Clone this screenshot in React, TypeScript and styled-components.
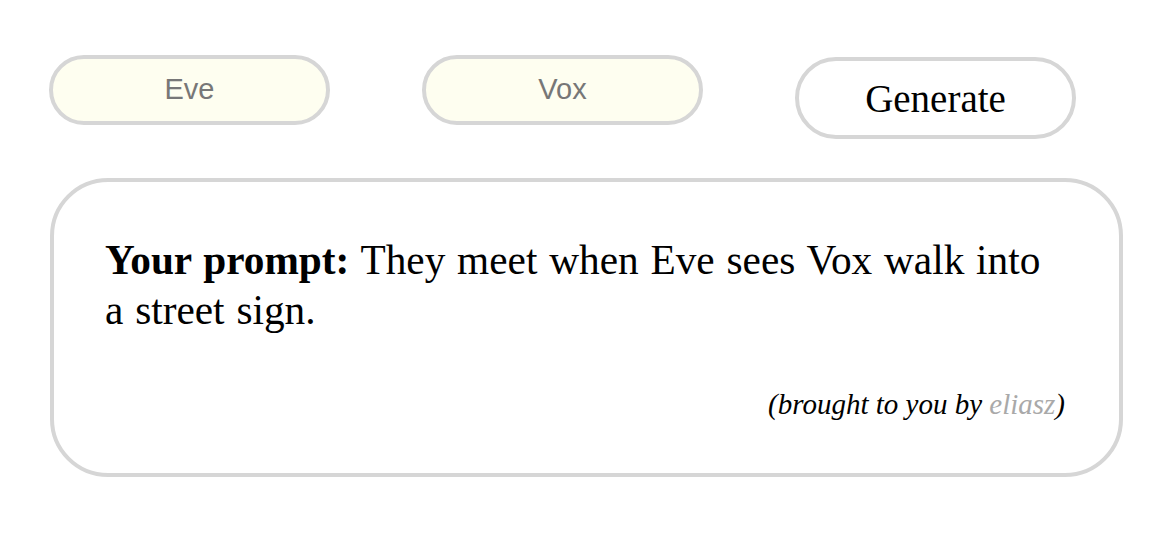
import React, { useState } from 'react'
import styled, { createGlobalStyle } from 'styled-components'

const GlobalStyle = createGlobalStyle`
  html, body {
    margin: 0;
    padding: 0;
    background: #ffffff;
  }
  body {
    font-family: "Liberation Serif", "Times New Roman", serif;
    color: #000;
  }
`

const Page = styled.div`
  width: 1170px;
  height: 536px;
  padding: 55px 0 0 49px;
  box-sizing: border-box;
`

const Controls = styled.div`
  display: flex;
  flex-direction: row;
  align-items: flex-start;
  gap: 92px;
`

const NameInput = styled.input`
  width: 281px;
  height: 70px;
  box-sizing: border-box;
  border: 4px solid #d6d6d6;
  border-radius: 35px;
  background-color: #fefef0;
  font-family: "Liberation Sans", Arial, sans-serif;
  font-size: 29px;
  color: #777777;
  text-align: center;
  outline: none;
  padding: 0 0 2px;
`

const GenerateButton = styled.button`
  width: 281px;
  height: 82px;
  margin-top: 2px;
  box-sizing: border-box;
  border: 4px solid #d6d6d6;
  border-radius: 41px;
  background-color: #ffffff;
  font-family: "Liberation Serif", "Times New Roman", serif;
  font-size: 39px;
  color: #000;
  cursor: pointer;
  padding: 0;
`

const PromptCard = styled.div`
  width: 1073px;
  height: 299px;
  margin-top: 39px;
  margin-left: 1px;
  box-sizing: border-box;
  border: 4px solid #d6d6d6;
  border-radius: 58px;
  padding: 53px 51px 0 51px;
  display: flex;
  flex-direction: column;
`

const PromptText = styled.p`
  margin: 0;
  max-width: 950px;
  font-size: 41.3px;
  line-height: 50px;
  word-spacing: 1.5px;
`

const Credit = styled.div`
  margin-top: 53px;
  text-align: right;
  font-style: italic;
  font-size: 29px;
  padding-right: 3px;
`

const Author = styled.span<{ $muted?: boolean }>`
  color: ${(p) => (p.$muted ? '#a9a9a9' : '#000')};
`

const App: React.FC = () => {
  const [first, setFirst] = useState('Eve')
  const [second, setSecond] = useState('Vox')

  return (
    <>
      <GlobalStyle />
      <Page>
        <Controls>
          <NameInput value={first} onChange={(e) => setFirst(e.target.value)} />
          <NameInput value={second} onChange={(e) => setSecond(e.target.value)} />
          <GenerateButton>Generate</GenerateButton>
        </Controls>
        <PromptCard>
          <PromptText>
            <b>Your prompt:</b> They meet when {first} sees {second} walk into a street sign.
          </PromptText>
          <Credit>
            (brought to you by <Author $muted>eliasz</Author>)
          </Credit>
        </PromptCard>
      </Page>
    </>
  )
}

export default App
